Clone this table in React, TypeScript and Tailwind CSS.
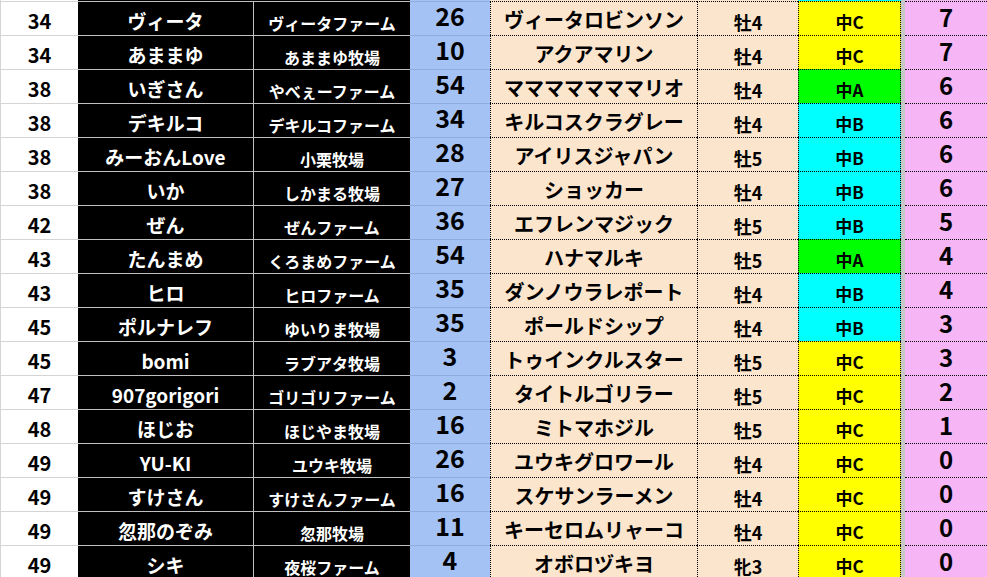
type Grade = "A" | "B" | "C";

type Entry = {
  rank: number;
  name: string;
  farm: string;
  no: number;
  horse: string;
  sex: string;
  grade: Grade;
  pt: number;
};

const entries: Entry[] = [
  { rank: 34, name: "ヴィータ", farm: "ヴィータファーム", no: 26, horse: "ヴィータロビンソン", sex: "牡4", grade: "C", pt: 7 },
  { rank: 34, name: "あままゆ", farm: "あままゆ牧場", no: 10, horse: "アクアマリン", sex: "牡4", grade: "C", pt: 7 },
  { rank: 38, name: "いぎさん", farm: "やべぇーファーム", no: 54, horse: "マママママママリオ", sex: "牡4", grade: "A", pt: 6 },
  { rank: 38, name: "デキルコ", farm: "デキルコファーム", no: 34, horse: "キルコスクラグレー", sex: "牡4", grade: "B", pt: 6 },
  { rank: 38, name: "みーおんLove", farm: "小栗牧場", no: 28, horse: "アイリスジャパン", sex: "牡5", grade: "B", pt: 6 },
  { rank: 38, name: "いか", farm: "しかまる牧場", no: 27, horse: "ショッカー", sex: "牡4", grade: "B", pt: 6 },
  { rank: 42, name: "ぜん", farm: "ぜんファーム", no: 36, horse: "エフレンマジック", sex: "牡5", grade: "B", pt: 5 },
  { rank: 43, name: "たんまめ", farm: "くろまめファーム", no: 54, horse: "ハナマルキ", sex: "牡5", grade: "A", pt: 4 },
  { rank: 43, name: "ヒロ", farm: "ヒロファーム", no: 35, horse: "ダンノウラレポート", sex: "牡4", grade: "B", pt: 4 },
  { rank: 45, name: "ポルナレフ", farm: "ゆいりま牧場", no: 35, horse: "ポールドシップ", sex: "牡4", grade: "B", pt: 3 },
  { rank: 45, name: "bomi", farm: "ラブアタ牧場", no: 3, horse: "トゥインクルスター", sex: "牡5", grade: "C", pt: 3 },
  { rank: 47, name: "907gorigori", farm: "ゴリゴリファーム", no: 2, horse: "タイトルゴリラー", sex: "牡5", grade: "C", pt: 2 },
  { rank: 48, name: "ほじお", farm: "ほじやま牧場", no: 16, horse: "ミトマホジル", sex: "牡5", grade: "C", pt: 1 },
  { rank: 49, name: "YU-KI", farm: "ユウキ牧場", no: 26, horse: "ユウキグロワール", sex: "牡4", grade: "C", pt: 0 },
  { rank: 49, name: "すけさん", farm: "すけさんファーム", no: 16, horse: "スケサンラーメン", sex: "牡4", grade: "C", pt: 0 },
  { rank: 49, name: "忽那のぞみ", farm: "忽那牧場", no: 11, horse: "キーセロムリャーコ", sex: "牡4", grade: "C", pt: 0 },
  { rank: 49, name: "シキ", farm: "夜桜ファーム", no: 4, horse: "オボロヅキヨ", sex: "牝3", grade: "C", pt: 0 },
];

const gradeBg: Record<Grade, string> = {
  A: "bg-[#00ff00]",
  B: "bg-[#00ffff]",
  C: "bg-[#ffff00]",
};

function Row({ e }: { e: Entry }) {
  return (
    <div className="flex h-[34px] font-bold">
      <div className="flex w-[78px] items-center justify-center border-l border-t border-[#d4d4d4] bg-white pt-[5px] text-[20px] leading-none text-black">
        {e.rank}
      </div>
      <div className="flex w-[175px] items-center justify-center border-t border-[#c0c0c0] bg-black pt-[4px] text-[19px] leading-none text-white">
        {e.name}
      </div>
      <div className="flex w-[157px] items-center justify-center border-l border-t border-[#c0c0c0] bg-black pt-[8px] text-[16px] leading-none text-white">
        {e.farm}
      </div>
      <div className="flex w-[80px] items-center justify-center border-t border-[#8fadde] bg-[#a4c2f4] pb-[5px] text-[25px] leading-[1.1] text-black">
        {e.no}
      </div>
      <div className="flex w-[207px] items-center justify-center border-l border-t border-dotted border-black bg-[#fce5cd] pt-[2px] text-[20px] leading-none text-black">
        {e.horse}
      </div>
      <div className="flex w-[101px] items-center justify-center border-l border-t border-dotted border-black bg-[#fce5cd] pt-[6px] text-[18px] leading-none text-black">
        {e.sex}
      </div>
      <div
        className={`flex w-[103px] items-center justify-center border-x border-t border-dotted border-black ${gradeBg[e.grade]} pt-[5px] text-[17px] leading-none text-black`}
      >
        中{e.grade}
      </div>
      <div className="w-[4px] bg-[#c8c8c8]" />
      <div className="flex w-[82px] items-center justify-center border-t border-dotted border-black bg-[#f6b5f4] pb-[3px] text-[24px] leading-none text-black">
        {e.pt}
      </div>
    </div>
  );
}

export default function App() {
  return (
    <div className="h-[577px] w-[987px] overflow-hidden bg-white font-['Noto_Sans_CJK_JP','Noto_Sans',sans-serif]">
      {/* 1px of the row above, cut by the crop */}
      <div className="flex h-[1px]">
        <div className="w-[78px] border-l border-[#d4d4d4] bg-white" />
        <div className="w-[332px] bg-black" />
        <div className="w-[80px] bg-[#a4c2f4]" />
        <div className="w-[308px] bg-[#fce5cd]" />
        <div className="w-[103px] bg-[#00ffff]" />
        <div className="w-[4px] bg-[#c8c8c8]" />
        <div className="w-[82px] bg-[#f6b5f4]" />
      </div>
      {entries.map((e, i) => (
        <Row key={i} e={e} />
      ))}
    </div>
  );
}
